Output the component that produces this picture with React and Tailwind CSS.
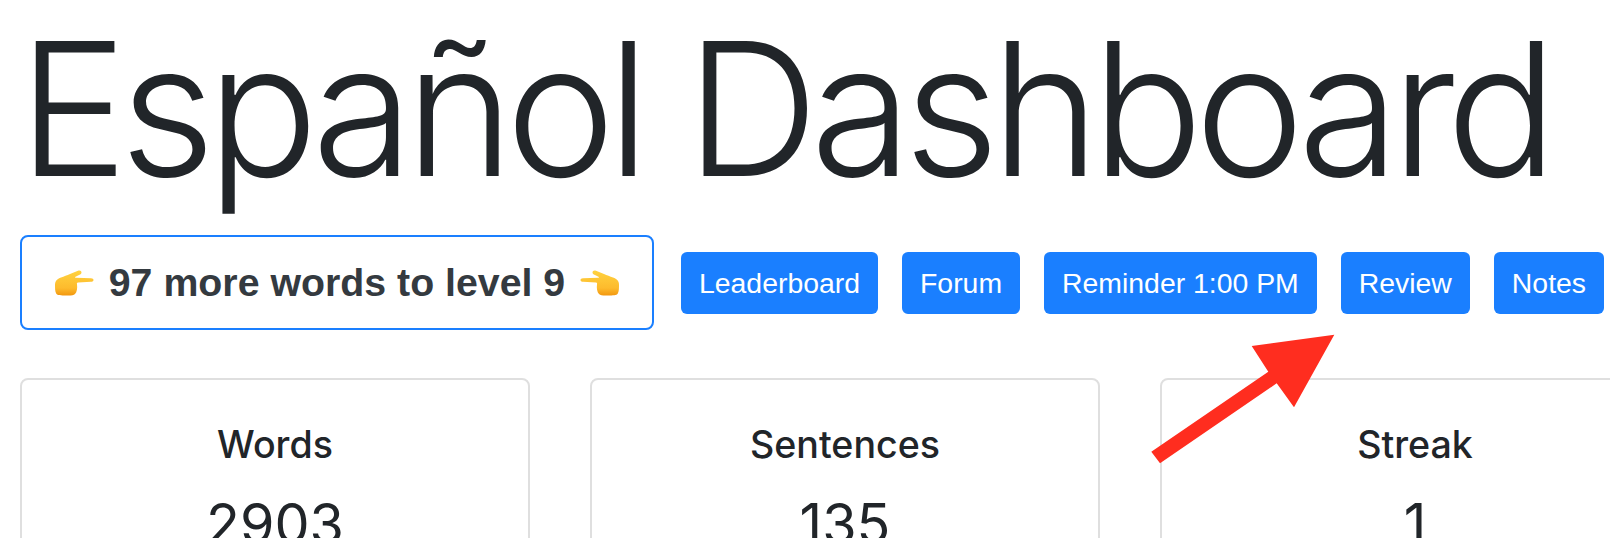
import React from 'react';

const links = ['Leaderboard', 'Forum', 'Reminder 1:00 PM', 'Review', 'Notes'];

const stats = [
  { label: 'Words', value: '2903' },
  { label: 'Sentences', value: '135' },
  { label: 'Streak', value: '1' },
];

// hand pointing right, drawn since there is no colour emoji font
const PointingHand = ({ flip }) => (
  <svg viewBox="0 0 40 26" className={`w-[40px] h-[26px] shrink-0 ${flip ? '-scale-x-100' : ''}`}>
    <defs>
      <linearGradient id={flip ? 'handL' : 'handR'} x1="0" y1="0" x2="0" y2="1">
        <stop offset="0" stopColor="#ffd23f" />
        <stop offset="0.7" stopColor="#fdbb2d" />
        <stop offset="1" stopColor="#f2970f" />
      </linearGradient>
    </defs>
    <path
      fill={`url(#${flip ? 'handL' : 'handR'})`}
      d="M1 15C1 11 3 9 7 7.500C10 6.300 13 5.500 16 4L24 .8C26 0 27.500 1 27.500 2.400C27.500 3.800 26 4.500 24.500 5.200L21.500 6.800C20.800 7.200 21 7.800 22 7.800L37 8.200C38.500 8.200 39.500 9 39.500 10C39.500 11 38.500 11.800 37 11.800L24 12.400C22.800 12.500 22.800 13.300 23 14.500C23.500 18 23 22 21 24C19.500 25.500 17 25.600 12 25.500C7 25.400 3.500 25.500 2.200 23.500C1 21.500 1 18 1 15Z"
    />
  </svg>
);

export default function App() {
  return (
    <div className="relative w-[1610px] h-[538px] overflow-hidden bg-white text-[#212529] font-['Inter','Liberation_Sans',sans-serif]">
      <h1 className="pl-[18px] h-[235px] pt-[4px] text-[185px] leading-[210px] font-light tracking-[-8.300px] whitespace-nowrap">
        Español Dashboard
      </h1>

      <div className="flex items-center pl-[20px] h-[95px]">
        <div className="w-[634px] h-[95px] flex items-center justify-center gap-[15px] border-2 border-[#1a7fff] rounded-[8px] font-['Liberation_Sans',sans-serif] font-bold text-[39.300px] text-[#343a40]">
          <PointingHand />
          <span>97 more words to level 9</span>
          <PointingHand flip />
        </div>
        <div className="flex gap-[24px] ml-[27px]">
          {links.map((label) => (
            <button
              key={label}
              className="h-[62px] px-[18px] pt-[2px] rounded-[6px] bg-[#1a7fff] text-white text-[28.400px] font-['Liberation_Sans',sans-serif] whitespace-nowrap"
            >
              {label}
            </button>
          ))}
        </div>
      </div>

      <div className="flex gap-[60px] pl-[20px] mt-[48px]">
        {stats.map((s) => (
          <div key={s.label} className="w-[510px] h-[300px] shrink-0 border-2 border-[#dfdfdf] rounded-[8px] pt-[43px] text-center">
            <div className="text-[37.600px] leading-[44px] font-medium">{s.label}</div>
            <div className="text-[55.700px] leading-[64px] mt-[25px]">{s.value}</div>
          </div>
        ))}
      </div>

      {/* annotation arrow over the page */}
      <svg className="absolute left-0 top-0 w-[1610px] h-[538px] pointer-events-none" viewBox="0 0 1610 538">
        <path
          fill="#ff2d1f"
          d="M1151.300 451.700L1160 463.300L1276.700 383.300L1294 407.300L1334.300 334.700L1251.700 346L1268.300 371.700Z"
        />
      </svg>
    </div>
  );
}
